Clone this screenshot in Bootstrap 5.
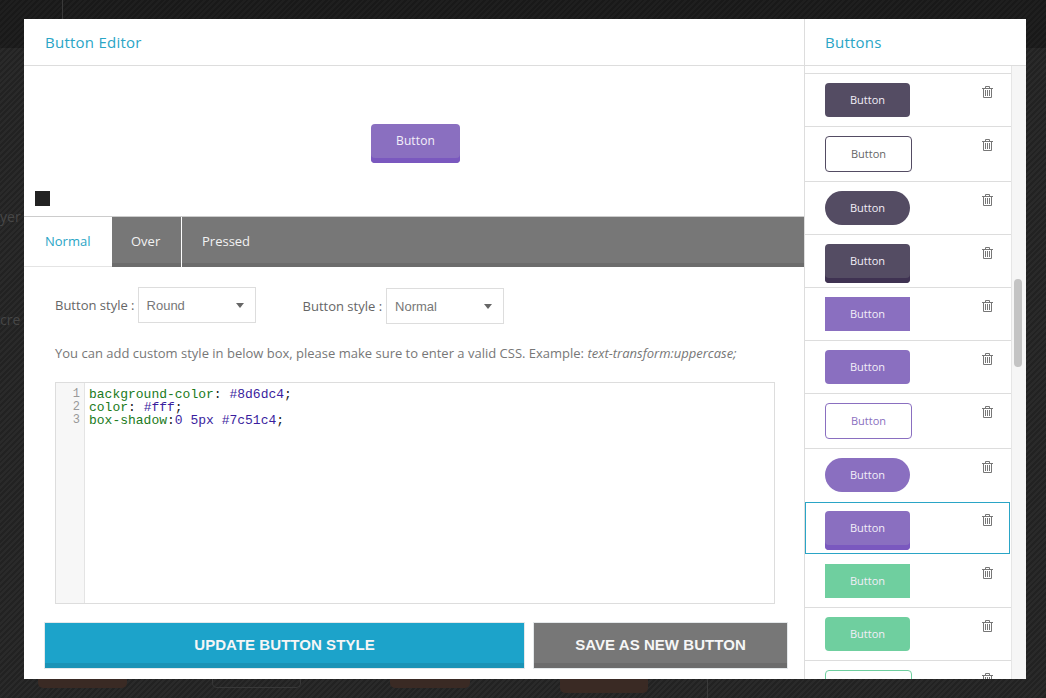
<!DOCTYPE html>
<html lang="en">
<head>
<meta charset="utf-8">
<title>Button Editor</title>
<link href="https://cdn.jsdelivr.net/npm/bootstrap@5.3.0/dist/css/bootstrap.min.css" rel="stylesheet">
<style>
html,body{height:698px;overflow:hidden}
body{font-family:"Open Sans",sans-serif;color:#666;font-size:13px;position:relative;
  background:repeating-linear-gradient(135deg,#2a2a2a 0 2px,#222 2px 4px)}
.topstrip{height:48px;background:repeating-linear-gradient(135deg,#1f1f1f 0 2px,#191919 2px 4px)}
.topdiv{position:absolute;left:62px;top:0;width:1px;height:19px;background:#3a3a3a}
.bgtxt{position:absolute;left:0;font-size:14px;color:#474747;line-height:16px}
.bgt1{top:209px}.bgt2{top:312px}
.bgbtn{position:absolute;height:9px;top:679px;background:#3a2a24;border-radius:0 0 5px 5px}
.bg1{left:38px;width:89px}
.bg2{left:212px;width:89px;background:transparent;border:1px solid #383838;border-top:0}
.bg3{left:390px;width:80px}
.bg4{left:560px;width:88px;height:14px}
.bgline{position:absolute;left:707px;top:679px;width:1px;height:19px;background:#3a3a3a}
.shell{position:absolute;left:24px;top:19px;width:1002px;height:660px;background:#fff;display:flex;overflow:hidden}
.leftpane{width:780px;display:flex;flex-direction:column;flex:none}
.rightpane{width:222px;border-left:1px solid #ddd;display:flex;flex-direction:column;flex:none}
.headbar{height:47px;border-bottom:1px solid #ddd;padding-left:21px;display:flex;align-items:center;flex:none}
.rightpane .headbar{padding-left:20px}
.headbar h2{font-family:"Open Sans",sans-serif;font-size:15px;font-weight:400;color:#2aa5c6;margin:0;letter-spacing:.25px}
.preview{height:150px;position:relative;flex:none;display:flex;justify-content:center;padding-top:58px;padding-left:3px}
.pvbtn{width:89px;height:39px;border-radius:4px;background:#8a6fc0;box-shadow:inset 0 -5px 0 #7a58bf;color:#f4effa;font-size:12px;letter-spacing:.1px;display:flex;justify-content:center;padding-top:9px;line-height:16px}
.swatch{position:absolute;left:11px;top:125px;width:15px;height:15px;background:#222}
.tabstrip{height:51px;display:flex;background:#777;border-top:1px solid #ccc;box-shadow:inset 0 -4px 0 #6c6c6c;flex:none;font-size:13px;color:#f2f2f2}
.tabitem{padding:15px 20px 0;line-height:18px}
.tabitem.on{width:88px;background:#fff;color:#2aa5c6;padding:15px 0 0 21px;box-shadow:inset 0 -1px 0 #e4e4e4}
.tabitem.sep{border-right:1px solid #fff;width:70px;padding-left:19px}
.formrow{display:flex;padding:20px 0 0 31px;height:77px;flex:none;font-size:13px}
.fieldgrp{display:flex}
.fieldgrp span{line-height:36px;color:#666;margin-right:3px}
.fieldgrp.two{margin-left:47px;margin-top:1px}
.fieldgrp.two span{margin-right:4px}
.selbox{width:118px;height:36px;border:1px solid #ddd;padding-left:8px;line-height:36px;color:#777;font-family:"Liberation Sans",sans-serif;font-size:13px;position:relative;background:#fff}
.selbox::after{content:"";position:absolute;right:11px;top:15px;border:4.5px solid transparent;border-top:5px solid #666;border-bottom:0}
.helptxt{margin:0;padding-left:31px;font-size:13px;line-height:18px;color:#777;flex:none;height:38px}
.codebox{margin-left:31px;width:720px;height:222px;border:1px solid #ddd;display:flex;flex:none;font-family:"Liberation Mono",monospace;font-size:13px;line-height:13px}
.gutter{width:29px;background:#f7f7f7;border-right:1px solid #e4e4e4;text-align:right;padding:5px 4px 0 0;color:#999;font-size:12px}
.codetxt{padding:5px 0 0 4px;color:#1a7a1a;white-space:pre}
.codetxt b{font-weight:400;color:#3a1d9e}
.codetxt i{font-style:normal;color:#222}
.actions{display:flex;gap:10px;padding:19px 0 0 21px}
.actbtn{height:45px;border:0;border-radius:0;color:#f6f6f6;font-family:"Liberation Sans",sans-serif;font-weight:700;font-size:15px;letter-spacing:.05px;padding:0;outline:1px solid #e4e8ea}
.actbtn.pri{width:479px;background:#1ca3ca;box-shadow:inset 0 -5px 0 #1a93b6}
.actbtn.sec{width:253px;background:#777;box-shadow:inset 0 -5px 0 #6c6c6c}
.listwrap{position:relative;flex:1;overflow:hidden;background:#fff}
.scrolltrack{position:absolute;right:0;top:0;bottom:0;width:15px;background:#f6f6f6;border-left:1px solid #e6e6e6}
.scrollthumb{position:absolute;left:2px;top:213px;width:8px;height:88px;background:#c4c4c4;border-radius:4px}
.btnlist{width:206px;padding-top:7px}
.rowitem{position:relative;border-top:1px solid #ddd;padding:9px 0 0 20px;height:53px}
.rowitem.tall{height:55px}
.rowitem.noline{border-top-color:transparent}
.rowitem.sel{border-top-color:transparent;width:205px}
.rowitem.sel::before{content:"";position:absolute;inset:0;border:1px solid #2aa5c6;pointer-events:none}
.sbtn{width:85px;height:34px;font-size:11px;line-height:34px;text-align:center;color:#f2eef8}
.sq{border-radius:0}.rnd{border-radius:4px}.pill{border-radius:17px}
.out{width:87px;height:36px;background:#fff;border:1px solid;line-height:34px}
.ink{background:#544c63}.inkout{border-color:#544c63;color:#666;background:#fff}
.vio{background:#8a6fc0}.vioout{border-color:#8a6fc0;color:#8a6fc0;background:#fff}
.grn{background:#6fcf9f}.grnout{border-color:#6fcf9f;color:#6fcf9f;background:#fff}
.ink3d{box-shadow:inset 0 -5px 0 #3f3252;height:39px;line-height:34px}
.vio3d{box-shadow:inset 0 -5px 0 #7a58bf;height:39px;line-height:34px}
.trash{position:absolute;left:177px;top:12px;width:11px;height:12px;color:#777}
</style>
</head>
<body>
<div class="topstrip"></div>
<div class="topdiv"></div>
<div class="bgtxt bgt1">yer</div>
<div class="bgtxt bgt2">cre</div>
<div class="bgbtn bg1"></div>
<div class="bgbtn bg2"></div>
<div class="bgbtn bg3"></div>
<div class="bgbtn bg4"></div>
<div class="bgline"></div>

<svg width="0" height="0" class="d-block position-absolute"><defs>
<symbol id="bin" viewBox="0 0 11 12"><path fill="none" stroke="currentColor" d="M0 2.5h11M3.5 2.5V.5h4v2M1.5 2.5v9h8v-9M3.5 4v6M5.5 4v6M7.5 4v6"/></symbol>
</defs></svg>

<div class="shell">
  <div class="leftpane">
    <div class="headbar"><h2>Button Editor</h2></div>
    <div class="preview">
      <div class="pvbtn">Button</div>
      <div class="swatch"></div>
    </div>
    <div class="tabstrip">
      <div class="tabitem on">Normal</div>
      <div class="tabitem sep">Over</div>
      <div class="tabitem">Pressed</div>
    </div>
    <div class="formrow">
      <div class="fieldgrp"><span>Button style :</span><div class="selbox">Round</div></div>
      <div class="fieldgrp two"><span>Button style :</span><div class="selbox">Normal</div></div>
    </div>
    <p class="helptxt">You can add custom style in below box, please make sure to enter a valid CSS. Example: <em>text-transform:uppercase;</em></p>
    <div class="codebox">
      <div class="gutter">1<br>2<br>3</div>
      <div class="codetxt">background-color<i>:</i> <b>#8d6dc4</b><i>;</i>
color<i>:</i> <b>#fff</b><i>;</i>
box-shadow<i>:</i><b>0 5px</b> <b>#7c51c4</b><i>;</i></div>
    </div>
    <div class="actions">
      <button type="button" class="btn actbtn pri">UPDATE BUTTON STYLE</button>
      <button type="button" class="btn actbtn sec">SAVE AS NEW BUTTON</button>
    </div>
  </div>
  <div class="rightpane">
    <div class="headbar"><h2>Buttons</h2></div>
    <div class="listwrap">
      <div class="btnlist">
        <div class="rowitem"><div class="sbtn rnd ink">Button</div><svg class="trash"><use href="#bin"/></svg></div>
        <div class="rowitem tall"><div class="sbtn out rnd inkout">Button</div><svg class="trash"><use href="#bin"/></svg></div>
        <div class="rowitem"><div class="sbtn pill ink">Button</div><svg class="trash"><use href="#bin"/></svg></div>
        <div class="rowitem"><div class="sbtn rnd ink ink3d">Button</div><svg class="trash"><use href="#bin"/></svg></div>
        <div class="rowitem"><div class="sbtn sq vio">Button</div><svg class="trash"><use href="#bin"/></svg></div>
        <div class="rowitem"><div class="sbtn rnd vio">Button</div><svg class="trash"><use href="#bin"/></svg></div>
        <div class="rowitem tall"><div class="sbtn out rnd vioout">Button</div><svg class="trash"><use href="#bin"/></svg></div>
        <div class="rowitem"><div class="sbtn pill vio">Button</div><svg class="trash"><use href="#bin"/></svg></div>
        <div class="rowitem sel"><div class="sbtn rnd vio vio3d">Button</div><svg class="trash"><use href="#bin"/></svg></div>
        <div class="rowitem noline"><div class="sbtn sq grn">Button</div><svg class="trash"><use href="#bin"/></svg></div>
        <div class="rowitem"><div class="sbtn rnd grn">Button</div><svg class="trash"><use href="#bin"/></svg></div>
        <div class="rowitem tall"><div class="sbtn out rnd grnout">Button</div><svg class="trash"><use href="#bin"/></svg></div>
      </div>
      <div class="scrolltrack"><div class="scrollthumb"></div></div>
    </div>
  </div>
</div>
<script src="https://cdn.jsdelivr.net/npm/bootstrap@5.3.0/dist/js/bootstrap.bundle.min.js"></script>
</body>
</html>
